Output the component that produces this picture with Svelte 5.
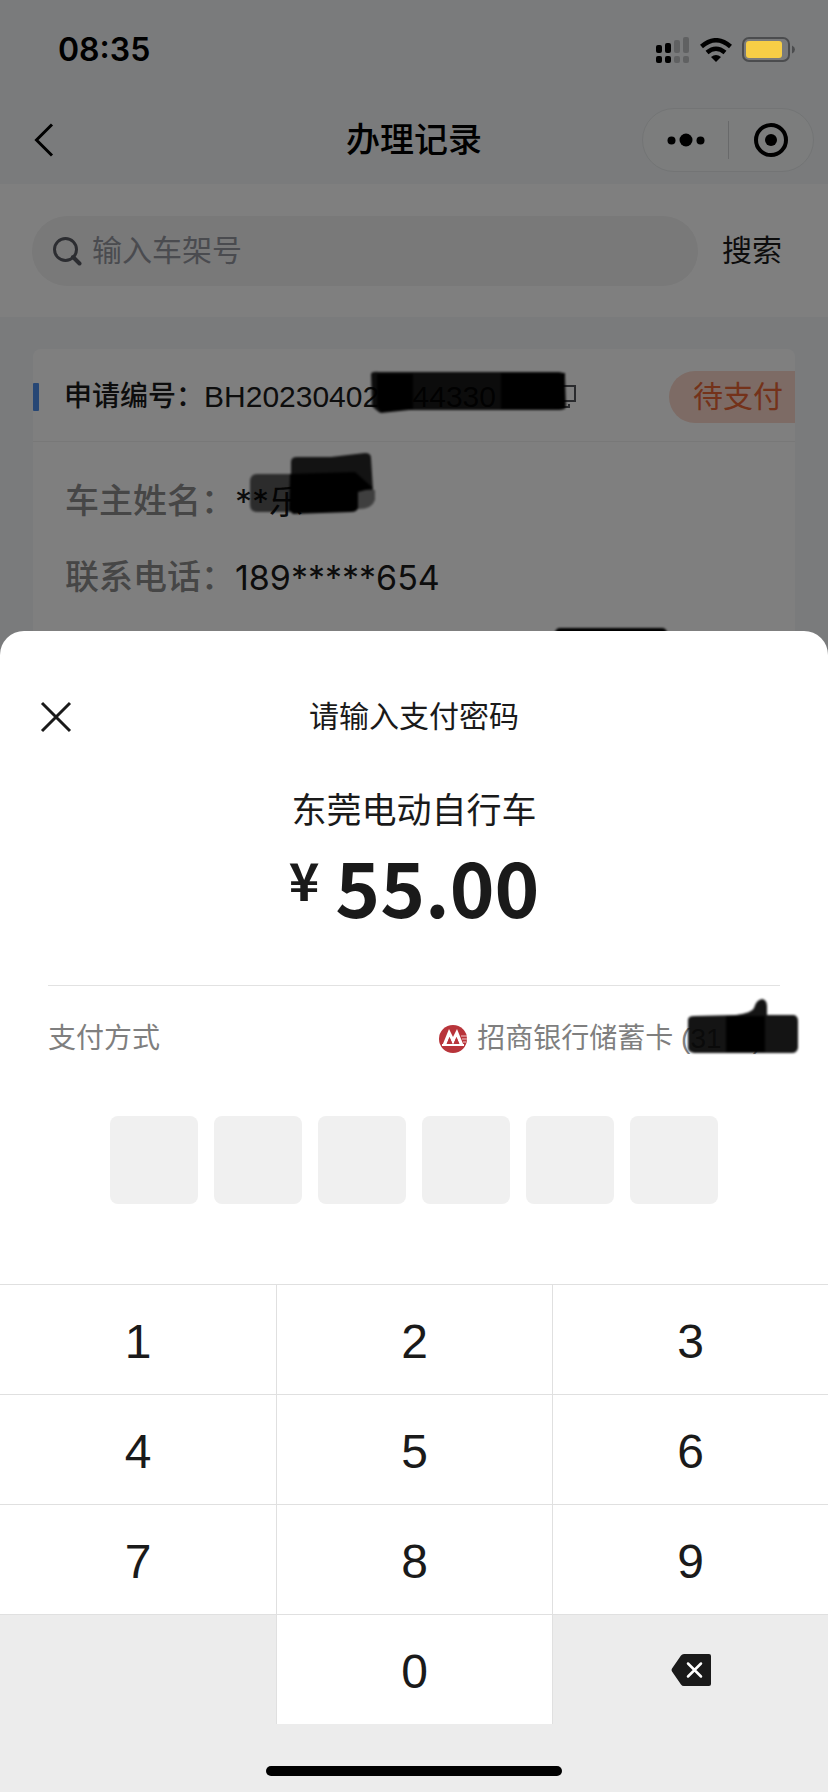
<script lang="ts">
	const keys = ['1', '2', '3', '4', '5', '6', '7', '8', '9'];
	const pinLength = 6;

	let keyword = $state('');
	let pin = $state('');
	let cells = $derived(Array.from({ length: pinLength }, (_, i) => pin[i] ?? ''));

	function press(key: string) {
		if (pin.length < pinLength) pin += key;
	}

	function erase() {
		pin = pin.slice(0, -1);
	}
</script>

<div class="screen">
	<div class="status-bar">
		<span class="clock">08:35</span>
		<div class="status-icons">
			<svg width="34" height="26" viewBox="0 0 34 26" aria-hidden="true">
				<g fill="#000">
					<rect x="0" y="8" width="6" height="8" rx="2" />
					<rect x="9" y="6" width="6" height="10" rx="2" />
					<rect x="0" y="19" width="6" height="7" rx="2" />
					<rect x="9" y="19" width="6" height="7" rx="2" />
				</g>
				<g fill="#606162">
					<rect x="18" y="3" width="6" height="13" rx="2" />
					<rect x="27" y="0" width="6" height="16" rx="2" />
					<rect x="18" y="19" width="6" height="7" rx="2" />
					<rect x="27" y="19" width="6" height="7" rx="2" />
				</g>
			</svg>
			<svg width="32" height="24" viewBox="0 0 32 24" aria-hidden="true">
				<g fill="none" stroke="#000" stroke-width="4.5">
					<path d="M1.5 8.5Q16-4 30.500 8.500" />
					<path d="M7 14.500Q16 7 25 14.500" />
				</g>
				<path d="M11 19Q16 15 21 19L16 24Z" fill="#000" />
			</svg>
			<svg width="54" height="26" viewBox="0 0 54 26" aria-hidden="true">
				<rect x="1" y="1" width="46" height="23" rx="6" fill="none" stroke="#4b4c4e" stroke-width="2" />
				<rect x="4" y="4" width="36" height="17" rx="3" fill="#f7ce46" />
				<path d="M50 8.500Q53 10 53 12.500T50 16.500Z" fill="#4b4c4e" />
			</svg>
		</div>
	</div>

	<main class="page">
		<header class="nav">
			<button type="button" class="icon-button back" aria-label="返回">
				<svg width="20" height="34" viewBox="0 0 20 34">
					<path d="M18 1.500L2.500 17L18 32.500" fill="none" stroke="#000" stroke-width="3" />
				</svg>
			</button>
			<h1>办理记录</h1>
			<div class="capsule">
				<button type="button" class="icon-button" aria-label="更多">
					<svg width="38" height="14" viewBox="0 0 38 14">
						<circle cx="4.500" cy="7.500" r="4" />
						<circle cx="19" cy="7" r="6.500" />
						<circle cx="33.500" cy="7.500" r="4" />
					</svg>
				</button>
				<button type="button" class="icon-button" aria-label="关闭小程序">
					<svg width="34" height="34" viewBox="0 0 34 34">
						<circle cx="17" cy="17" r="15" fill="none" stroke="#000" stroke-width="4" />
						<circle cx="17" cy="17" r="6" />
					</svg>
				</button>
			</div>
		</header>

		<form class="search" onsubmit={(e) => e.preventDefault()}>
			<label class="search-box">
				<svg width="30" height="30" viewBox="0 0 30 30" aria-hidden="true">
					<g fill="none" stroke="#585a62" stroke-width="3">
						<circle cx="13.500" cy="13.500" r="11" />
						<path d="M21 21L27.500 27.500" stroke-width="4" stroke-linecap="round" />
					</g>
				</svg>
				<input type="text" placeholder="输入车架号" aria-label="输入车架号" bind:value={keyword} />
			</label>
			<button type="submit">搜索</button>
		</form>

		<section class="record">
			<div class="record-head">
				<span class="marker"></span>
				<span class="record-title">申请编号：</span>
				<span class="record-number">BH20230402&#8199;&#8199;44330</span>
				<svg class="scribble scribble-number" width="200" height="44" viewBox="0 0 200 44" aria-hidden="true">
					<path d="M2 4Q3 1 10 2L190 2Q196 2 196 8L197 36Q196 40 190 40L40 40L12 43Q9 42 3 36Z" opacity="0.9" />
					<path d="M8 4L44 4L44 39L12 42L8 36ZM132 3L196 3L196 39L132 39Z" />
				</svg>
				<button type="button" class="icon-button copy" aria-label="复制">
					<svg width="24" height="26" viewBox="0 0 24 26" fill="none" stroke="#55565c" stroke-width="2">
						<path d="M7 2H22V17H7Z" />
						<path d="M16 20V23H2V8H4" />
					</svg>
				</button>
				<span class="tag">待支付</span>
			</div>
			<dl>
				<div class="field">
					<dt>车主姓名：</dt>
					<dd>**乐</dd>
					<svg class="scribble scribble-name" width="132" height="66" viewBox="0 0 132 66" aria-hidden="true">
						<path d="M3 30Q3 22 10 22L46 22L46 60L10 60Q3 60 3 53Z" opacity="0.65" />
						<path d="M44 10Q44 5 50 5L84 5L118 1Q124 1 124 6L126 38L44 38Z" opacity="0.85" />
						<path d="M105 38L128 38L128 48Q125 57 112 57L105 57Z" opacity="0.5" />
						<path d="M43 22L108 20L126 36L111 40L111 56Q110 60 104 60L46 62L42 58Z" />
					</svg>
				</div>
				<div class="field">
					<dt>联系电话：</dt>
					<dd>189*****654</dd>
				</div>
				<div class="field">
					<svg class="scribble scribble-next" width="112" height="30" viewBox="0 0 112 30" aria-hidden="true">
						<rect width="112" height="30" rx="5" />
					</svg>
				</div>
			</dl>
		</section>
	</main>

	<div class="mask"></div>

	<div class="sheet" role="dialog" aria-labelledby="sheet-title">
		<div class="sheet-head">
			<button type="button" class="icon-button" aria-label="关闭">
				<svg width="32" height="32" viewBox="0 0 32 32">
					<path d="M2 2L30 30M30 2L2 30" fill="none" stroke="#1a1a1a" stroke-width="3" />
				</svg>
			</button>
			<h2 id="sheet-title">请输入支付密码</h2>
		</div>

		<p class="payee">东莞电动自行车</p>
		<p class="amount"><span class="currency">¥</span>55.00</p>

		<div class="method">
			<span>支付方式</span>
			<span class="bank">
				<svg width="28" height="28" viewBox="0 0 28 28" aria-hidden="true">
					<circle cx="14" cy="14" r="14" fill="#b8343a" />
					<path d="M3 20H25" stroke="#fff" stroke-width="2" />
					<path d="M3.500 20L10 4L14 12L18 4L24.500 20H20.500L17.500 12L14 20L10.500 12L7.500 20Z" fill="#fff" />
					<path d="M7.500 19L10.500 12L13.500 19ZM14.500 19L17.500 12L20.500 19Z" fill="#b8343a" />
					<path d="M22 11H28M23 14H28M24 17H27" stroke="#f3c9ca" stroke-width="1" />
				</svg>
				招商银行储蓄卡 (31&#8199;&#8199;)
			</span>
			<svg class="scribble scribble-card" width="114" height="58" viewBox="0 0 114 58" aria-hidden="true">
				<path d="M2 22Q2 18 8 18L50 17Q66 15 68 10Q70 2 76 1Q81 2 81 8L81 17L108 17Q112 18 112 23L112 50Q111 55 106 55L8 55Q2 54 2 50Z" opacity="0.92" />
				<path d="M40 18L79 18L79 54L40 54Z" />
			</svg>
		</div>

		<div class="pin">
			{#each cells as cell, index}
				<input type="password" value={cell} maxlength="1" readonly aria-label="密码第 {index + 1} 位" />
			{/each}
		</div>

		<div class="keypad">
			{#each keys as key}
				<button type="button" class="key" onclick={() => press(key)}>{key}</button>
			{/each}
			<span class="key blank"></span>
			<button type="button" class="key" onclick={() => press('0')}>0</button>
			<button type="button" class="key blank" onclick={erase} aria-label="删除">
				<svg width="40" height="32" viewBox="0 0 40 32">
					<path d="M13 0H38Q40 0 40 2V30Q40 32 38 32H13Q11 32 10 30.500L1 17.500Q0 16 1 14.500L10 1.500Q11 0 13 0Z" fill="#1a1a1a" />
					<path d="M17 9.500L30 22.500M30 9.500L17 22.500" stroke="#fff" stroke-width="2.500" stroke-linecap="round" />
				</svg>
			</button>
		</div>
		<div class="home-indicator"></div>
	</div>
</div>

<style>
	:global(body) {
		margin: 0;
	}

	.screen {
		position: relative;
		min-height: 100vh;
		overflow: hidden;
		background: #f4f7f9;
		color: #1a1a1a;
		font-family: 'Liberation Sans', 'Noto Sans CJK SC', sans-serif;
		line-height: 1.4;
	}

	h1,
	h2,
	p,
	dl,
	dd {
		margin: 0;
		font-weight: 400;
	}

	svg {
		display: block;
		flex: none;
	}

	button {
		padding: 0;
		border: none;
		background: none;
		color: inherit;
		font: inherit;
		cursor: pointer;
	}

	.icon-button {
		display: flex;
		align-items: center;
		justify-content: center;
	}

	/* Status bar stays undimmed above the mask */
	.status-bar {
		position: relative;
		z-index: 2;
		display: flex;
		align-items: center;
		justify-content: space-between;
		height: 100px;
		padding: 0 32px 0 58px;
		box-sizing: border-box;
		color: #000;
	}

	.clock {
		font: 600 32px/40px Inter, sans-serif;
	}

	.status-icons {
		display: flex;
		align-items: center;
		gap: 10px;
	}

	/* Page */
	.nav {
		display: grid;
		grid-template-columns: 1fr auto 1fr;
		align-items: center;
		height: 84px;
		padding: 0 14px 4px;
		box-sizing: border-box;
		color: #000;
	}

	.back {
		justify-self: start;
		padding: 0 20px;
	}

	.nav h1 {
		font-size: 34px;
		font-weight: 500;
		line-height: 48px;
	}

	.capsule {
		justify-self: end;
		display: grid;
		grid-template-columns: 1fr 1fr;
		width: 172px;
		height: 64px;
		box-sizing: border-box;
		border: 1px solid #e6e9ea;
		border-radius: 32px;
		background: #f8fafb;
	}

	.capsule .icon-button + .icon-button {
		border-left: 1px solid #d0d2d4;
		margin: 12px 0;
	}

	.search {
		display: flex;
		align-items: center;
		gap: 24px;
		padding: 32px 46px 31px 32px;
		background: #fff;
		font-size: 30px;
	}

	.search-box {
		flex: 1;
		display: flex;
		align-items: center;
		gap: 10px;
		height: 70px;
		padding: 0 20px;
		box-sizing: border-box;
		border-radius: 35px;
		background: #f2f2f2;
	}

	.search-box input {
		flex: 1;
		min-width: 0;
		padding: 0;
		border: none;
		outline: none;
		background: none;
		font: inherit;
	}

	.search-box input::placeholder {
		color: #94969f;
		opacity: 1;
	}

	.record {
		margin: 32px 33px 0;
		border-radius: 8px;
		background: #fff;
	}

	.record-head {
		position: relative;
		display: flex;
		align-items: center;
		height: 93px;
		padding-top: 4px;
		box-sizing: border-box;
		border-bottom: 1px solid #f0f0f0;
		font-size: 28px;
	}

	.marker {
		width: 6px;
		height: 28px;
		margin-right: 25px;
		border-radius: 1px;
		background: #4f8fea;
	}

	.record-title {
		font-weight: 500;
	}

	.record-number {
		font-size: 30px;
	}

	.copy {
		margin-left: 57px;
	}

	.tag {
		margin-left: auto;
		padding: 0 12px 0 24px;
		border-radius: 26px 0 0 26px;
		background: #fad7ca;
		color: #e86434;
		font-size: 30px;
		line-height: 52px;
	}

	dl {
		padding: 22px 32px;
	}

	.field {
		position: relative;
		display: flex;
		align-items: center;
		height: 76px;
		font-size: 34px;
	}

	dt {
		color: #8c8c8c;
		font-weight: 500;
	}

	dd {
		font-family: Inter, 'Noto Sans CJK SC', sans-serif;
	}

	/* Marker strokes over private data */
	.scribble {
		position: absolute;
		filter: blur(1px);
	}

	.scribble-number {
		left: 336px;
		top: 21px;
	}

	.scribble-name {
		left: 182px;
		top: -12px;
	}

	.scribble-next {
		right: 96px;
		top: 12px;
	}

	.scribble-card {
		right: -20px;
		top: 12px;
	}

	.mask {
		position: absolute;
		inset: 0;
		background: rgba(0, 0, 0, 0.5);
	}

	/* Payment sheet */
	.sheet {
		position: absolute;
		right: 0;
		bottom: 0;
		left: 0;
		z-index: 3;
		padding-top: 64px;
		border-radius: 24px 24px 0 0;
		background: #fff;
	}

	.sheet-head {
		display: grid;
		grid-template-columns: 1fr auto 1fr;
		align-items: center;
		height: 44px;
		padding: 0 40px;
	}

	.sheet-head .icon-button {
		justify-self: start;
	}

	h2 {
		font-size: 30px;
	}

	.payee {
		margin-top: 48px;
		font-size: 35px;
		line-height: 48px;
		text-align: center;
	}

	.amount {
		display: flex;
		justify-content: center;
		gap: 16px;
		margin-top: 10px;
		font-family: 'Noto Sans CJK SC', sans-serif;
		font-size: 76px;
		font-weight: 700;
		line-height: 80px;
	}

	.currency {
		font-size: 52px;
		line-height: 68px;
	}

	.method {
		position: relative;
		display: flex;
		align-items: center;
		justify-content: space-between;
		height: 106px;
		margin: 60px 48px 0;
		border-top: 1px solid #e2e2e2;
		color: #7f7f7f;
		font-size: 28px;
	}

	.bank {
		display: flex;
		align-items: center;
		gap: 10px;
		padding-right: 18px;
	}

	.pin {
		display: flex;
		justify-content: center;
		gap: 16px;
		margin-top: 24px;
	}

	.pin input {
		width: 88px;
		height: 88px;
		padding: 0;
		border: none;
		border-radius: 8px;
		outline: none;
		background: #f0f0f0;
		font-size: 48px;
		text-align: center;
	}

	.keypad {
		display: grid;
		grid-template-columns: repeat(3, 1fr);
		margin-top: 80px;
		background: #ececec;
	}

	.key {
		display: flex;
		align-items: center;
		justify-content: center;
		height: 110px;
		padding-top: 4px;
		box-sizing: border-box;
		border-top: 1px solid #e0e0e0;
		border-left: 1px solid #e0e0e0;
		background: #fff;
		font-size: 48px;
	}

	.key:nth-child(3n + 1) {
		border-left: none;
	}

	.key.blank {
		padding-top: 0;
		background: #ececec;
	}

	.home-indicator {
		padding: 42px 266px 16px;
		background: #ececec;
	}

	.home-indicator::before {
		content: '';
		display: block;
		height: 10px;
		border-radius: 5px;
		background: #000;
	}
</style>
